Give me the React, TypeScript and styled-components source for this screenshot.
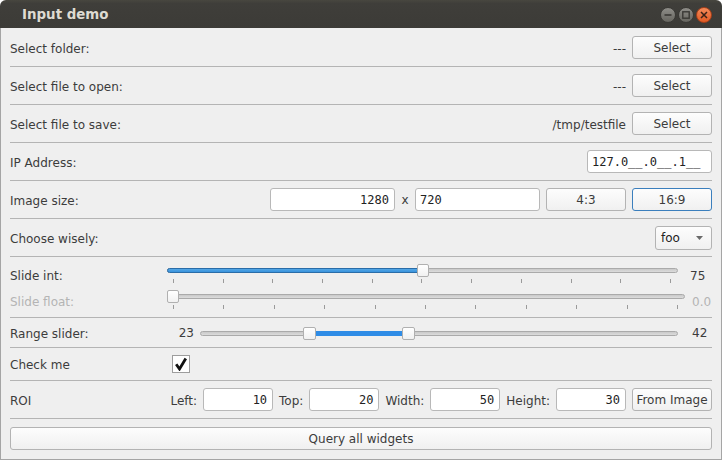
import React from "react";
import styled, { createGlobalStyle } from "styled-components";

const Global = createGlobalStyle`
  html, body { margin: 0; padding: 0; background: #ffffff; }
  #root { width: 722px; height: 460px; overflow: hidden; }
  * { box-sizing: border-box; }
`;

const Window = styled.div`
  width: 722px;
  height: 460px;
  display: flex;
  flex-direction: column;
  background: #efefef;
  font-family: "DejaVu Sans", "Liberation Sans", sans-serif;
  font-size: 12px;
  color: #3c3c3c;
  border-radius: 6px 6px 0 0;
  overflow: hidden;
`;

const TitleBar = styled.div`
  height: 28px;
  flex: 0 0 28px;
  display: flex;
  align-items: center;
  padding: 0 10px 0 22px;
  background: linear-gradient(#48473f 0%, #3f3e3a 12%, #3c3b37 100%);
  color: #dfdbd2;
  font-weight: bold;
  font-size: 13.4px;
`;

const WinButtons = styled.div`
  margin-left: auto;
  display: flex;
  gap: 2px;
  align-items: center;
  padding-top: 1px;
`;

const WinBtn = styled.div<{ $close?: boolean }>`
  width: 16px;
  height: 16px;
  border-radius: 50%;
  display: flex;
  align-items: center;
  justify-content: center;
  border: 1px solid ${(p) => (p.$close ? "#a8401a" : "#3a3935")};
  background: ${(p) =>
    p.$close
      ? "linear-gradient(#f48a5a, #e25a23)"
      : "linear-gradient(#8e8d88, #66655f)"};
`;

const Body = styled.div`
  flex: 1;
  display: flex;
  flex-direction: column;
  padding: 1px 9px 9px 9px;
  border-left: 1px solid #a5a5a5;
  border-right: 1px solid #a5a5a5;
  border-bottom: 1px solid #a5a5a5;
`;

const Row = styled.div<{ $h: number }>`
  height: ${(p) => p.$h}px;
  flex: 0 0 ${(p) => p.$h}px;
  display: grid;
  grid-template-columns: 150px 1fr;
  column-gap: 6px;
  align-items: center;
  border-bottom: 1px solid #b4b4b4;
`;

const Label = styled.span<{ $disabled?: boolean }>`
  color: ${(p) => (p.$disabled ? "#b4b4b4" : "#3c3c3c")};
  white-space: nowrap;
  padding-top: 2px;
`;

const RightGroup = styled.div`
  display: flex;
  justify-content: flex-end;
  align-items: center;
  gap: 6px;
`;

const Button = styled.button<{ $w?: number; $focus?: boolean }>`
  width: ${(p) => (p.$w ? `${p.$w}px` : "100%")};
  height: 23px;
  border: 1px solid ${(p) => (p.$focus ? "#3b7fbd" : "#b3b3b3")};
  border-radius: 3px;
  background: linear-gradient(#fdfdfd, #f0f0f0);
  font-family: "DejaVu Sans", "Liberation Sans", sans-serif;
  font-size: 12px;
  color: #3c3c3c;
  padding: 1px 0 0 0;
  display: flex;
  align-items: center;
  justify-content: center;
`;

const LineEdit = styled.div<{ $w: number; $align?: string }>`
  width: ${(p) => p.$w}px;
  height: 23px;
  border: 1px solid #b8b8b8;
  border-radius: 3px;
  background: #ffffff;
  font-family: "DejaVu Sans Mono", "Liberation Mono", monospace;
  font-size: 12px;
  color: #222;
  line-height: 22px;
  padding: 0 5px 0 4px;
  text-align: ${(p) => p.$align || "left"};
  white-space: nowrap;
  overflow: hidden;
`;

const XLabel = styled.span`
  width: 8px;
  text-align: center;
  padding-top: 1px;
`;

const Combo = styled.div`
  width: 57px;
  height: 24px;
  border: 1px solid #b3b3b3;
  border-radius: 3px;
  background: linear-gradient(#fdfdfd, #f0f0f0);
  display: flex;
  align-items: center;
  justify-content: space-between;
  padding: 1px 8px 0 5px;
  color: #222;
`;

const SliderBlock = styled.div`
  display: grid;
  grid-template-columns: 150px 1fr;
  column-gap: 6px;
  align-items: center;
  padding-top: 5px;
  grid-column: 1 / span 2;
  align-self: start;
`;

const SliderLine = styled.div`
  display: flex;
  align-items: flex-start;
  height: 26px;
`;

const SliderArea = styled.div`
  position: relative;
  flex: 1;
  height: 26px;
  margin-left: 1px;
`;

const Groove = styled.div<{ $top: number }>`
  position: absolute;
  left: 0;
  right: 0;
  top: ${(p) => p.$top}px;
  height: 5px;
  border: 1px solid #aaaaaa;
  border-radius: 3px;
  background: linear-gradient(#c9c9c9, #dcdcdc);
`;

const Fill = styled.div<{ $top: number }>`
  position: absolute;
  top: ${(p) => p.$top}px;
  height: 5px;
  border: 1px solid #2a6da8;
  border-radius: 3px;
  background: linear-gradient(#52a6e6, #3993dc);
`;

const RangeFill = styled.div<{ $top: number }>`
  position: absolute;
  top: ${(p) => p.$top}px;
  height: 5px;
  background: #2f8ce6;
`;

const Handle = styled.div<{ $top: number; $w: number; $h: number }>`
  position: absolute;
  top: ${(p) => p.$top}px;
  width: ${(p) => p.$w}px;
  height: ${(p) => p.$h}px;
  border: 1px solid #b0b0b0;
  border-radius: 2px;
  background: linear-gradient(#ffffff, #f1f1f1);
`;

const Ticks = styled.div`
  position: absolute;
  top: 17px;
  left: 6px;
  right: 7px;
  display: flex;
  justify-content: space-between;
`;

const Tick = styled.div`
  width: 1px;
  height: 4px;
  background: #9a9a9a;
`;

const ValueLabel = styled.span<{ $w: number; $gap: number; $disabled?: boolean; $align?: string }>`
  width: ${(p) => p.$w}px;
  margin-left: ${(p) => p.$gap}px;
  color: ${(p) => (p.$disabled ? "#b4b4b4" : "#3c3c3c")};
  text-align: ${(p) => p.$align || "left"};
  line-height: 26px;
  padding-top: 1px;
  flex: 0 0 auto;
`;

const SliderLabel = styled.span<{ $disabled?: boolean }>`
  color: ${(p) => (p.$disabled ? "#b4b4b4" : "#3c3c3c")};
  line-height: 26px;
  height: 26px;
  padding-top: 1px;
  display: block;
`;

const RangeLine = styled.div`
  display: flex;
  align-items: center;
  height: 26px;
`;

const RangeArea = styled.div`
  position: relative;
  flex: 1;
  height: 26px;
  margin-left: 6px;
`;

const CheckBox = styled.div`
  width: 18px;
  height: 18px;
  margin-left: 6px;
  border: 1px solid #9d9d9d;
  background: #ffffff;
  display: flex;
  align-items: center;
  justify-content: center;
`;

const QueryButton = styled(Button)`
  margin-top: 8px;
  flex: 0 0 23px;
`;

const ticks = Array.from({ length: 11 });

function Slider({ frac, disabled }: { frac: number; disabled?: boolean }) {
  return (
    <SliderArea>
      <Groove $top={6} />
      {!disabled && frac > 0 && (
        <Fill $top={6} style={{ left: 0, width: `calc((100% - 12px) * ${frac} + 6px)` }} />
      )}
      <Handle
        $top={2}
        $w={12}
        $h={13}
        style={{ left: `calc((100% - 12px) * ${frac})` }}
      />
      <Ticks>
        {ticks.map((_, i) => (
          <Tick key={i} />
        ))}
      </Ticks>
    </SliderArea>
  );
}

function RangeSlider({ a, b }: { a: number; b: number }) {
  return (
    <RangeArea>
      <Groove $top={11} />
      <RangeFill
        $top={11}
        style={{
          left: `calc((100% - 13px) * ${a} + 6px)`,
          width: `calc((100% - 13px) * ${b - a})`,
        }}
      />
      <Handle $top={7} $w={13} $h={13} style={{ left: `calc((100% - 13px) * ${a})` }} />
      <Handle $top={7} $w={13} $h={13} style={{ left: `calc((100% - 13px) * ${b})` }} />
    </RangeArea>
  );
}

export default function App() {
  return (
    <>
      <Global />
      <Window>
        <TitleBar>
          <span>Input demo</span>
          <WinButtons>
            <WinBtn>
              <svg width="8" height="8" viewBox="0 0 8 8">
                <rect x="0.5" y="3.2" width="7" height="1.6" fill="#3a3935" />
              </svg>
            </WinBtn>
            <WinBtn>
              <svg width="8" height="8" viewBox="0 0 8 8">
                <rect x="0.8" y="0.8" width="6.4" height="6.4" fill="none" stroke="#3a3935" strokeWidth="1.4" />
              </svg>
            </WinBtn>
            <WinBtn $close>
              <svg width="8" height="8" viewBox="0 0 8 8">
                <path d="M1 1 L7 7 M7 1 L1 7" stroke="#3a2218" strokeWidth="1.5" />
              </svg>
            </WinBtn>
          </WinButtons>
        </TitleBar>
        <Body>
          <Row $h={38}>
            <Label>Select folder:</Label>
            <RightGroup>
              <Label>---</Label>
              <Button $w={80}>Select</Button>
            </RightGroup>
          </Row>
          <Row $h={38}>
            <Label>Select file to open:</Label>
            <RightGroup>
              <Label>---</Label>
              <Button $w={80}>Select</Button>
            </RightGroup>
          </Row>
          <Row $h={38}>
            <Label>Select file to save:</Label>
            <RightGroup>
              <Label>/tmp/testfile</Label>
              <Button $w={80}>Select</Button>
            </RightGroup>
          </Row>
          <Row $h={38}>
            <Label>IP Address:</Label>
            <RightGroup>
              <LineEdit $w={125}>127.0__.0__.1__</LineEdit>
            </RightGroup>
          </Row>
          <Row $h={38}>
            <Label>Image size:</Label>
            <RightGroup>
              <LineEdit $w={125} $align="right">1280</LineEdit>
              <XLabel>x</XLabel>
              <LineEdit $w={125}>720</LineEdit>
              <Button $w={80}>4:3</Button>
              <Button $w={80} $focus>16:9</Button>
            </RightGroup>
          </Row>
          <Row $h={38}>
            <Label>Choose wisely:</Label>
            <RightGroup>
              <Combo>
                <span>foo</span>
                <svg width="7" height="4" viewBox="0 0 7 4">
                  <path d="M0 0 L7 0 L3.5 4 Z" fill="#6a6a6a" />
                </svg>
              </Combo>
            </RightGroup>
          </Row>
          <Row $h={61}>
            <SliderBlock>
              <SliderLabel>Slide int:</SliderLabel>
              <SliderLine>
                <Slider frac={0.5} />
                <ValueLabel $w={22} $gap={12}>75</ValueLabel>
              </SliderLine>
              <SliderLabel $disabled>Slide float:</SliderLabel>
              <SliderLine>
                <Slider frac={0} disabled />
                <ValueLabel $w={20} $gap={7} $disabled>0.0</ValueLabel>
              </SliderLine>
            </SliderBlock>
          </Row>
          <Row $h={30}>
            <Label>Range slider:</Label>
            <RangeLine>
              <ValueLabel $w={28} $gap={0} $align="right">23</ValueLabel>
              <RangeSlider a={0.2215} b={0.434} />
              <ValueLabel $w={20} $gap={14}>42</ValueLabel>
            </RangeLine>
          </Row>
          <Row $h={33}>
            <Label>Check me</Label>
            <CheckBox>
              <svg width="14" height="14" viewBox="0 0 14 14">
                <path d="M2.2 7.3 L5.5 12 L11.8 1.5" fill="none" stroke="#111" strokeWidth="2.8" strokeLinejoin="miter" />
              </svg>
            </CheckBox>
          </Row>
          <Row $h={38}>
            <Label>ROI</Label>
            <RightGroup>
              <Label>Left:</Label>
              <LineEdit $w={70} $align="right">10</LineEdit>
              <Label>Top:</Label>
              <LineEdit $w={70} $align="right">20</LineEdit>
              <Label>Width:</Label>
              <LineEdit $w={70} $align="right">50</LineEdit>
              <Label>Height:</Label>
              <LineEdit $w={70} $align="right">30</LineEdit>
              <Button $w={80}>From Image</Button>
            </RightGroup>
          </Row>
          <QueryButton>Query all widgets</QueryButton>
        </Body>
      </Window>
    </>
  );
}
